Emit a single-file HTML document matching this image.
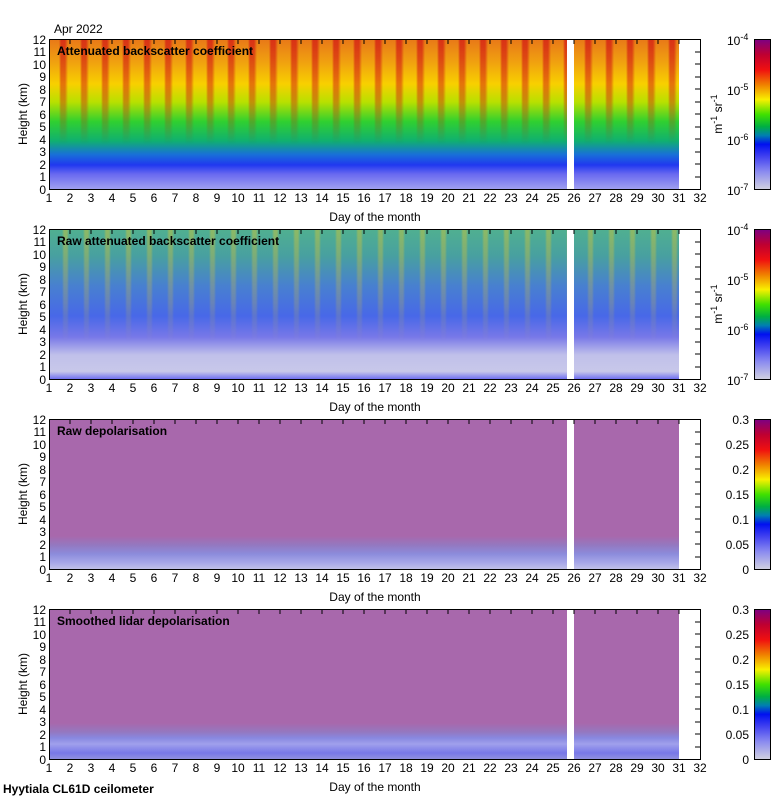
<!DOCTYPE html>
<html><head><meta charset="utf-8"><style>
body{margin:0;background:#fff;width:780px;height:800px;position:relative;overflow:hidden;font-family:"Liberation Sans",sans-serif}
.d{position:absolute;left:50px;width:629px;height:150px}
.gap{position:absolute;left:567px;width:7px;height:150px;background:#fff}
.p1{background:linear-gradient(to bottom,#e87818 0%,#f0a010 15%,#f8d000 30%,#b8e000 42%,#30d030 55%,#10b070 68%,#1870d8 77%,#2038f0 84%,#6868f0 90%,#a0a0f0 100%)}
.s1{background:repeating-linear-gradient(to right,transparent 0,transparent 9px,rgba(210,20,20,.7) 11px,rgba(210,20,20,.7) 15px,transparent 18px,transparent 21px);-webkit-mask:linear-gradient(to bottom,#000 0%,rgba(0,0,0,.6) 40%,transparent 70%);mask:linear-gradient(to bottom,#000 0%,rgba(0,0,0,.6) 40%,transparent 70%)}
.p2{background:linear-gradient(to bottom,#50b090 0%,#48a0a0 18%,#4880d0 38%,#4868e8 58%,#7878e8 72%,#c0c0ea 84%,#c8c8ea 95%,#7070f0 100%)}
.s2{background:repeating-linear-gradient(to right,transparent 0,transparent 12px,rgba(230,200,40,.4) 14px,rgba(230,200,40,.4) 17px,transparent 19px,transparent 21px);-webkit-mask:linear-gradient(to bottom,#000 0%,rgba(0,0,0,.5) 50%,transparent 75%);mask:linear-gradient(to bottom,#000 0%,rgba(0,0,0,.5) 50%,transparent 75%)}
.p3{background:linear-gradient(to bottom,#a868ac 0%,#a868ac 78%,#9478c0 84%,#8c8cdc 90%,#a8a8e8 96%,#c0c0e8 100%)}
.p4{background:linear-gradient(to bottom,#a868ac 0%,#a868ac 76%,#9478c0 82%,#8888e0 86%,#a0a0ec 90%,#7878e8 96%,#9090e0 100%)}
.cb{position:absolute;left:755px;width:15px;height:149px;background:linear-gradient(to bottom,#800080 0%,#c00030 10%,#f01010 20%,#f08000 30%,#f8f000 40%,#40e000 50%,#00b040 58%,#0080b0 64%,#0010f0 70%,#4040f0 78%,#8888f0 88%,#d0d0e0 100%)}
</style></head><body>
<div class="d p1" style="top:39px"></div><div class="d s1" style="top:39px"></div><div class="gap" style="top:39px"></div>
<div class="d p2" style="top:229px"></div><div class="d s2" style="top:229px"></div><div class="gap" style="top:229px"></div>
<div class="d p3" style="top:419px"></div><div class="gap" style="top:419px"></div>
<div class="d p4" style="top:609px"></div><div class="gap" style="top:609px"></div>
<div class="cb" style="top:40px"></div><div class="cb" style="top:230px"></div><div class="cb" style="top:420px"></div><div class="cb" style="top:610px"></div>
<svg width="780" height="800" style="position:absolute;left:0;top:0" font-family="Liberation Sans, sans-serif" font-size="12">
<defs>
<g id="ax">
<rect x="49.5" y="0.5" width="651" height="150" fill="none" stroke="#000"/>
<rect x="754.5" y="0.5" width="16" height="150" fill="none" stroke="#000"/>
<path d="M695 13H700M695 25H700M695 38H700M695 50H700M695 63H700M695 75H700M695 88H700M695 100H700M695 113H700M695 125H700M695 138H700M70 1V5M91 1V5M112 1V5M133 1V5M154 1V5M175 1V5M196 1V5M217 1V5M238 1V5M259 1V5M280 1V5M301 1V5M322 1V5M343 1V5M364 1V5M385 1V5M406 1V5M427 1V5M448 1V5M469 1V5M490 1V5M511 1V5M532 1V5M553 1V5M574 1V5M595 1V5M616 1V5M637 1V5M658 1V5M679 1V5" stroke="#000"/>
<g text-anchor="middle">
<text x="49" y="163">1</text><text x="70" y="163">2</text><text x="91" y="163">3</text><text x="112" y="163">4</text><text x="133" y="163">5</text><text x="154" y="163">6</text><text x="175" y="163">7</text><text x="196" y="163">8</text><text x="217" y="163">9</text><text x="238" y="163">10</text><text x="259" y="163">11</text><text x="280" y="163">12</text><text x="301" y="163">13</text><text x="322" y="163">14</text><text x="343" y="163">15</text><text x="364" y="163">16</text><text x="385" y="163">17</text><text x="406" y="163">18</text><text x="427" y="163">19</text><text x="448" y="163">20</text><text x="469" y="163">21</text><text x="490" y="163">22</text><text x="511" y="163">23</text><text x="532" y="163">24</text><text x="553" y="163">25</text><text x="574" y="163">26</text><text x="595" y="163">27</text><text x="616" y="163">28</text><text x="637" y="163">29</text><text x="658" y="163">30</text><text x="679" y="163">31</text><text x="700" y="163">32</text>
<text x="375" y="182">Day of the month</text>
<text transform="translate(27,75) rotate(-90)">Height (km)</text>
</g>
<g text-anchor="end">
<text x="46" y="155">0</text><text x="46" y="142">1</text><text x="46" y="130">2</text><text x="46" y="117">3</text><text x="46" y="105">4</text><text x="46" y="92">5</text><text x="46" y="80">6</text><text x="46" y="67">7</text><text x="46" y="55">8</text><text x="46" y="42">9</text><text x="46" y="30">10</text><text x="46" y="17">11</text><text x="46" y="5">12</text>
</g>
</g>
<g id="cbl">
<text x="727" y="6">10<tspan font-size="9" dy="-5">-4</tspan></text>
<text x="727" y="56">10<tspan font-size="9" dy="-5">-5</tspan></text>
<text x="727" y="106">10<tspan font-size="9" dy="-5">-6</tspan></text>
<text x="727" y="156">10<tspan font-size="9" dy="-5">-7</tspan></text>
<text transform="translate(722,75) rotate(-90)" text-anchor="middle">m<tspan font-size="9" dy="-5">-1</tspan><tspan dy="5"> sr</tspan><tspan font-size="9" dy="-5">-1</tspan></text>
</g>
<g id="cbd" text-anchor="end">
<text x="749" y="5">0.3</text><text x="749" y="30">0.25</text><text x="749" y="55">0.2</text><text x="749" y="80">0.15</text><text x="749" y="105">0.1</text><text x="749" y="130">0.05</text><text x="749" y="155">0</text>
</g>
</defs>
<text x="54" y="33">Apr 2022</text>
<g transform="translate(0,39)"><use href="#ax"/><use href="#cbl"/><text x="57" y="16" font-weight="bold">Attenuated backscatter coefficient</text></g>
<g transform="translate(0,229)"><use href="#ax"/><use href="#cbl"/><text x="57" y="16" font-weight="bold">Raw attenuated backscatter coefficient</text></g>
<g transform="translate(0,419)"><use href="#ax"/><use href="#cbd"/><text x="57" y="16" font-weight="bold">Raw depolarisation</text></g>
<g transform="translate(0,609)"><use href="#ax"/><use href="#cbd"/><text x="57" y="16" font-weight="bold">Smoothed lidar depolarisation</text></g>
<text x="3" y="793" font-weight="bold">Hyytiala CL61D ceilometer</text>
</svg>
</body></html>
